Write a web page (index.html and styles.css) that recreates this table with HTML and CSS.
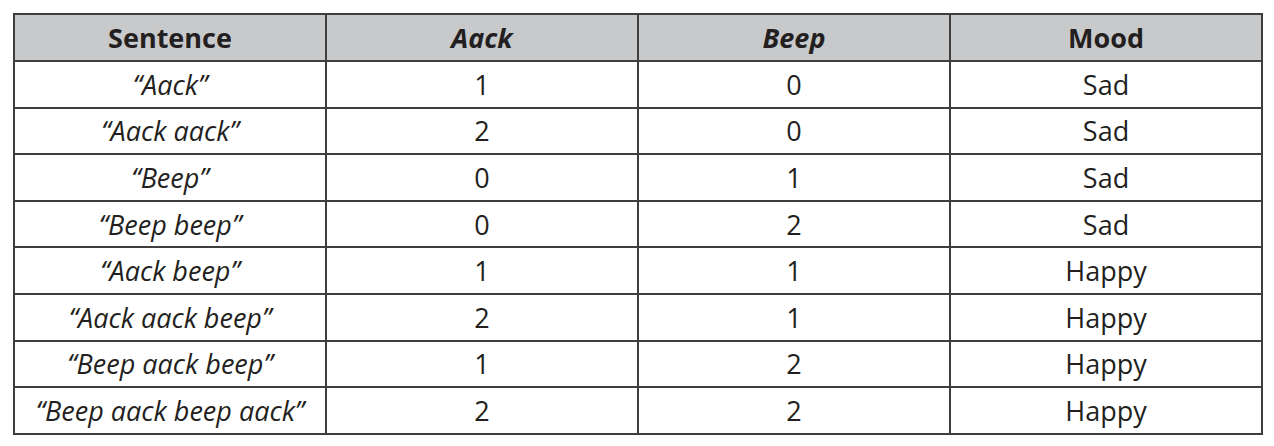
FILE: index.html
```html
<!DOCTYPE html>
<html>
<head>
<meta charset="utf-8">
<link rel="stylesheet" href="styles.css">
</head>
<body>
<div class="wrap">
<table class="data">
  <thead>
    <tr><th>Sentence</th><th class="it">Aack</th><th class="it">Beep</th><th>Mood</th></tr>
  </thead>
  <tbody>
    <tr><td class="it">“Aack”</td><td>1</td><td>0</td><td>Sad</td></tr>
    <tr><td class="it">“Aack aack”</td><td>2</td><td>0</td><td>Sad</td></tr>
    <tr><td class="it">“Beep”</td><td>0</td><td>1</td><td>Sad</td></tr>
    <tr><td class="it">“Beep beep”</td><td>0</td><td>2</td><td>Sad</td></tr>
    <tr><td class="it">“Aack beep”</td><td>1</td><td>1</td><td>Happy</td></tr>
    <tr><td class="it">“Aack aack beep”</td><td>2</td><td>1</td><td>Happy</td></tr>
    <tr><td class="it">“Beep aack beep”</td><td>1</td><td>2</td><td>Happy</td></tr>
    <tr><td class="it">“Beep aack beep aack”</td><td>2</td><td>2</td><td>Happy</td></tr>
  </tbody>
</table>
</div>
</body>
</html>
```
FILE: styles.css
```css
html, body {
  margin: 0;
  padding: 0;
  background: #ffffff;
}
.wrap {
  padding: 13px 0 0 13px;
}
.data {
  border-collapse: collapse;
  table-layout: fixed;
  width: 1250px;
  font-family: "Open Sans", "Noto Sans", sans-serif;
  font-size: 27px;
  line-height: 1;
  color: #231f20;
}
.data th, .data td {
  border: 2px solid #3e3e3e;
  text-align: center;
  vertical-align: middle;
  padding: 0;
  width: 25%;
}
.data th {
  background: #c8c9cb;
  font-weight: 700;
  height: 45px;
}
.data td {
  font-weight: 400;
  height: 44.6px;
}
.data .it {
  font-style: italic;
}
```
